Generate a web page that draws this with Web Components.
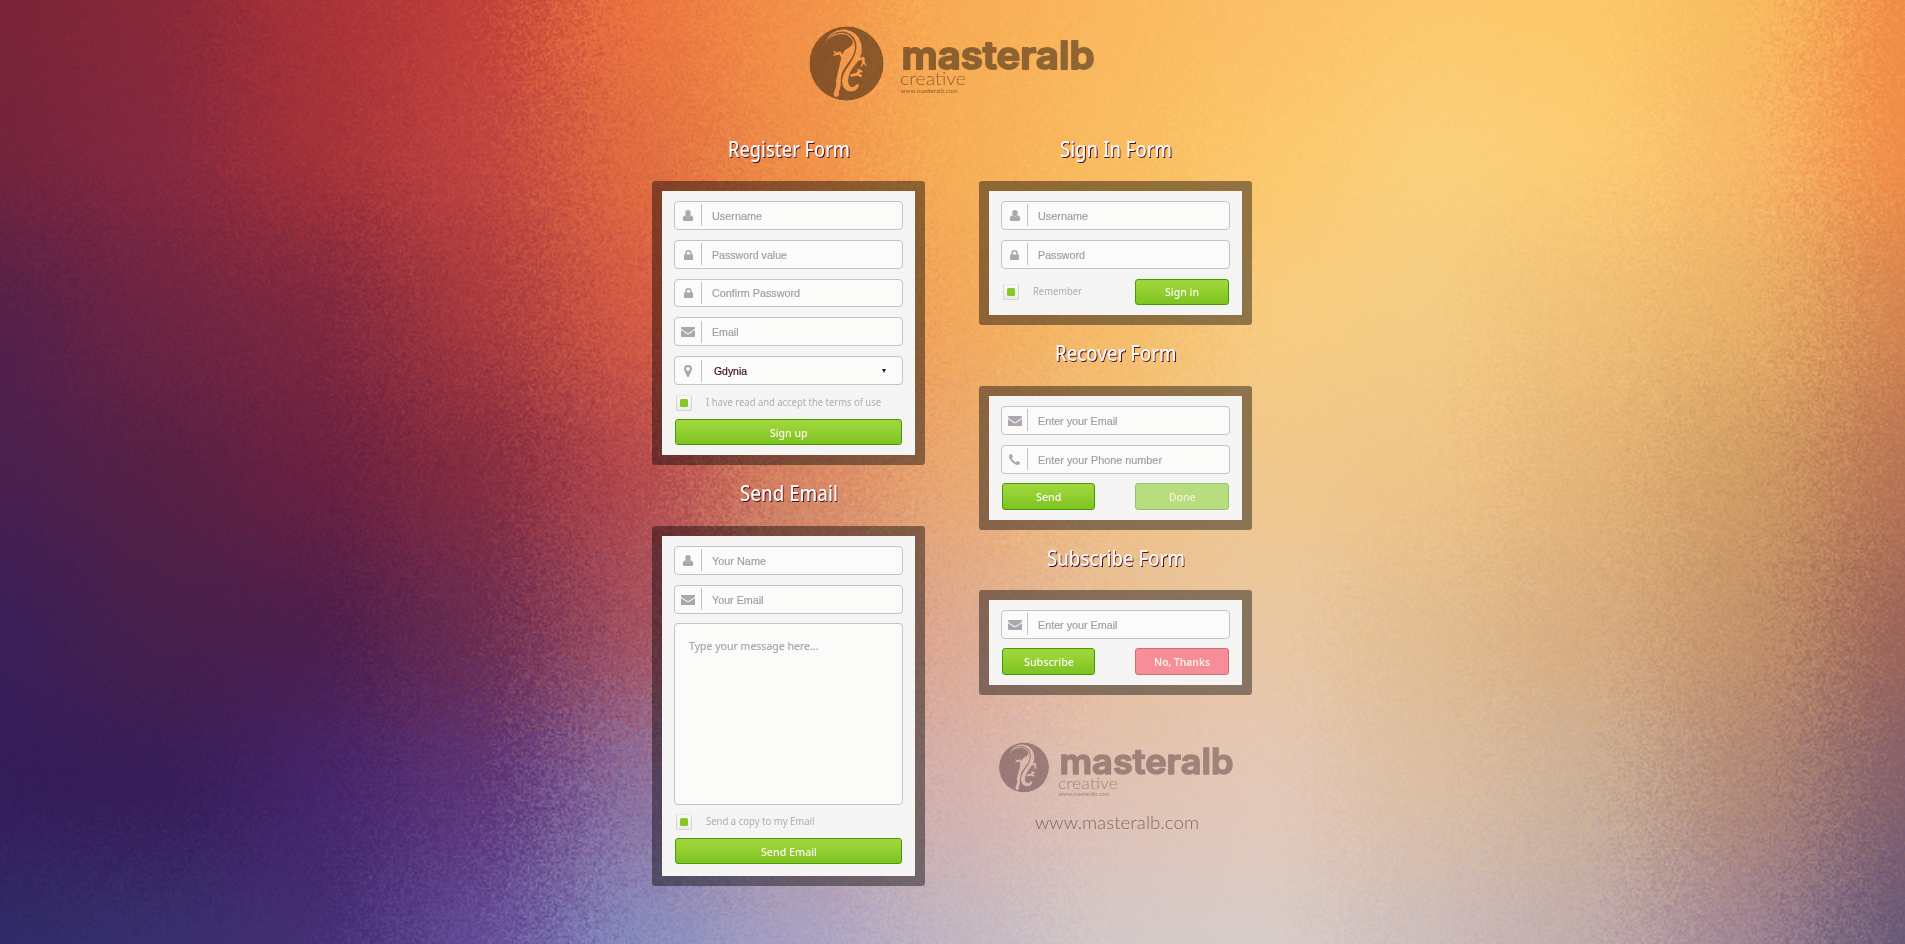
<!DOCTYPE html>
<html lang="en">
<head>
<meta charset="utf-8">
<title>Masteralb Forms</title>
<style>
html,body{margin:0;height:100%;overflow:hidden}
body{font-family:"Noto Sans","Open Sans",sans-serif;background:#c87c58}
</style>
</head>
<body>
<forms-page></forms-page>
<script>
const shadow = (el, html) => { el.attachShadow({mode:'open'}).innerHTML = html; return el.shadowRoot; };

/* Frosted colour field: a grid of colours, sampled with scattered positions. */
const GRID = [
'7a2438 882838 a83238 c0403a ec7440 f29048 f8ac54 fab85e fcc068 fcc86c fcc868 f8bc60 f08c48',
'74243c 842840 a43238 c04440 e06c40 f09048 f6ae56 fabc60 fcc86c fad07c fccc74 f8b868 f08c48',
'54204a 6e2442 7e2840 a83a3e d45a44 e4804c f2a85c f6bc68 f8cc80 f4cc84 f0c078 e8b068 d48450',
'4a2050 562044 6a2040 842c40 b4484c d68462 eaa870 f0c080 f0c88c f0c488 e4b478 d09c64 b87454',
'3a1e58 48204c 4c1e4c 6a2c50 a45060 c88878 deaa92 e8c09a eac8a4 e0bc90 d8ac80 c4926a 9c6458',
'341c5a 361c58 44246a 5c3478 8c70a0 b89aa0 d6b2ae e0c2b4 e4c8b8 dcbea4 ccb098 b08878 84606c',
'302c68 38306e 442e74 644c98 868cbe a8a0c4 c2b6c2 d4c8c8 d8ccc8 ccbcbc c0acac a08494 685878'
].map(r => r.split(' ').map(h => [0,2,4].map(i => parseInt(h.substr(i,2),16))));

customElements.define('grain-backdrop', class extends HTMLElement {
  connectedCallback(){
    const W = 1905, H = 944;
    const r = shadow(this, `<style>:host{display:block;position:absolute;inset:0;overflow:hidden}canvas{display:block}</style><canvas width="${W}" height="${H}"></canvas>`);
    const ctx = r.querySelector('canvas').getContext('2d');
    const img = ctx.createImageData(W, H), d = img.data;
    let s = 12345;
    const rnd = () => ((s = (s * 1664525 + 1013904223) >>> 0) / 4294967296);
    const cw = Math.ceil(W/2)+2, ch = Math.ceil(H/2)+2;
    const nx = new Float32Array(cw*ch), ny = new Float32Array(cw*ch);
    for (let i=0;i<nx.length;i++){ nx[i]=(rnd()+rnd()-1)*62; ny[i]=(rnd()+rnd()-1)*62; }
    const sm = t => t*t*(3-2*t)*.4 + t*.6;
    for (let y=0;y<H;y++) for (let x=0;x<W;x++){
      const cx=x>>1, cy=y>>1, k=cy*cw+cx, fx=(x&1)*.5, fy=(y&1)*.5;
      const mix=a=>(a[k]*(1-fx)+a[k+1]*fx)*(1-fy)+(a[k+cw]*(1-fx)+a[k+cw+1]*fx)*fy;
      let u=Math.min(11.999,Math.max(0,(x+mix(nx))/W*12)), v=Math.min(5.999,Math.max(0,(y+mix(ny))/H*6));
      const i=u|0, j=v|0; u=sm(u-i); v=sm(v-j);
      const a=GRID[j][i], b=GRID[j][i+1], c=GRID[j+1][i], e=GRID[j+1][i+1], o=(y*W+x)*4;
      for (let n=0;n<3;n++) d[o+n]=(a[n]*(1-u)+b[n]*u)*(1-v)+(c[n]*(1-u)+e[n]*u)*v;
      d[o+3]=255;
    }
    ctx.putImageData(img,0,0);
  }
});

/* Text condensed or widened to the width given in "w". */
customElements.define('fit-text', class extends HTMLElement {
  connectedCallback(){
    const w = +this.getAttribute('w');
    const r = shadow(this, `<style>:host{display:inline-block;white-space:nowrap;width:${w}px}span{display:inline-block;transform-origin:0 50%}</style><span><slot></slot></span>`);
    const sp = r.querySelector('span'), m = sp.getBoundingClientRect().width;
    if (m) sp.style.transform = `scaleX(${w/m})`;
  }
});

const ICONS = {
 user:['10','11','0 0 10 11','<path d="M5 0a2.75 2.9 0 0 1 2.75 2.9C7.75 4.8 6.5 6.3 5 6.3S2.25 4.8 2.25 2.9A2.75 2.9 0 0 1 5 0zM2.3 5.3C2.9 6.1 3.9 6.600 5 6.600s2.100-.5 2.700-1.300C9.500 5.500 10.200 7 10.200 9.200 10.200 10.400 9.300 11 8.300 11H1.700C.7 11-.2 10.400-.2 9.200-.2 7 .5 5.500 2.300 5.300z"/>'],
 lock:['9','10','0 0 9 10','<path fill-rule="evenodd" d="M1.300 4.500V3a3.200 3 0 0 1 6.400 0v1.500h.6q.7 0 .7.7v4.100q0 .7-.7.7H.7Q0 10 0 9.300V5.200q0-.7.7-.7zM2.800 4.500h3.400V3a1.700 1.600 0 0 0-3.400 0z"/>'],
 mail:['14','10','0 0 14 10','<path d="M.5 0h13Q14 0 14 .6c0 1-.6 1.700-1.200 2.100L8.500 5.500c-.5.400-1 .7-1.500.7s-1-.3-1.500-.7L1.200 2.700C.7 2.400 0 1.600 0 .6Q0 0 .5 0zM0 2.900c.2.300.5.5.8.700l4 2.700c.6.500 1.400 1 2.200 1s1.600-.5 2.200-1l4-2.700c.3-.2.600-.4.8-.7v6.400q0 .7-.6.7H.6Q0 10 0 9.300z"/>'],
 pin:['8','12','0 0 8 12','<path fill-rule="evenodd" d="M4 0a4 4 0 0 1 4 4c0 .6-.1 1.100-.3 1.500L4.900 11.400c-.4.800-1.400.8-1.800 0L.3 5.500C.1 5.100 0 4.600 0 4a4 4 0 0 1 4-4zm0 2a2 2 0 1 0 0 4 2 2 0 0 0 0-4z"/>'],
 phone:['11','11','0 0 11 11','<path d="M11 8.700c0 .4-.2 1.100-.4 1.400-.3.600-1.300.9-2 .9-.8 0-1.700-.3-2.400-.7C4.100 9.300 1.700 6.900.7 4.800.3 4.100 0 3.200 0 2.400 0 1.700.3.700.9.400 1.200.2 1.900 0 2.300 0c.3 0 .5.500.6.700l1 1.800c.3.700-1.100 1.200-1.100 1.700 0 .8 3.200 4 4 4 .5 0 1-1.400 1.700-1.100l1.800 1c.2.100.7.300.7.600z"/>']
};
customElements.define('line-icon', class extends HTMLElement {
  connectedCallback(){
    const [w,h,vb,p]=ICONS[this.getAttribute('name')];
    shadow(this, `<style>:host{display:block}svg{display:block;fill:#aca6af;overflow:visible}</style><svg width="${w}" height="${h}" viewBox="${vb}">${p}</svg>`);
  }
});

customElements.define('form-field', class extends HTMLElement {
  connectedCallback(){
    const sel = this.hasAttribute('select');
    shadow(this, `<style>
      :host{display:flex;align-items:center;box-sizing:border-box;height:28.800px;border:1px solid #c6c2c4;border-radius:4px;background:#fbfbf9;
        font:11px "Liberation Sans",Arial,sans-serif;color:#a29da3;-webkit-text-stroke:.2px currentColor}
      .i{display:flex;align-items:center;justify-content:center;width:var(--cell,26px);height:22px;border-right:1px solid #c4bfc2;box-sizing:content-box}
      line-icon{margin-top:1px}
      .t{padding:1px 0 0 ${sel?12:10}px;flex:1;color:${sel?'#3a1020':'inherit'}}
      .a{width:0;height:0;border:2.500px solid transparent;border-top:4px solid #3a1020;border-bottom:0;margin-right:16px}
      </style><div class="i"><line-icon name="${this.getAttribute('icon')}"></line-icon></div>
      <div class="t"><slot></slot></div>${sel?'<div class="a"></div>':''}`);
  }
});

customElements.define('message-box', class extends HTMLElement {
  connectedCallback(){ shadow(this, `<style>:host{display:block;box-sizing:border-box;height:182px;border:1px solid #c6c2c4;border-radius:4px;background:#fbfbf9;padding:13px 14px;font-size:11.500px;line-height:17px;color:#a9a5a9;-webkit-text-stroke:.2px currentColor}</style><slot></slot>`); }
});

customElements.define('check-row', class extends HTMLElement {
  connectedCallback(){ shadow(this, `<style>
    :host{display:flex;align-items:center;gap:14px;height:16px;padding-left:2px;font-size:11px;line-height:16px;color:#b0acb0}
    i{display:flex;align-items:center;justify-content:center;box-sizing:border-box;width:16px;height:16px;border:1px solid #d8d4d6;border-top-color:#e8e6e6;border-radius:2px;background:linear-gradient(#f8f8f6,#ecebea)}
    i::before{content:"";width:8px;height:8px;border-radius:1.500px;background:#84c726}
    div{margin-top:-2px}
    </style><i></i><div><slot></slot></div>`); }
});

customElements.define('push-button', class extends HTMLElement {
  connectedCallback(){ shadow(this, `<style>
    :host{display:flex;align-items:center;justify-content:center;box-sizing:border-box;height:26.500px;border:1px solid #459a0c;border-radius:3px;
      background:linear-gradient(#9fd63d,#98d235 35%,#85c828 75%,#80c41f);color:#fdfaf4;font-size:11.500px;font-weight:500;line-height:16px;padding-top:1px}
    :host([kind=done]){background:#b7dd7e;border-color:#8fc675;color:#f8efe0}
    :host([kind=no]){background:#f58e98;border-color:#cc706c;color:#fbf1e0;font-weight:600}
    </style><slot></slot>`); }
});

customElements.define('form-panel', class extends HTMLElement {
  connectedCallback(){ shadow(this, `<style>
    :host{display:block}
    h2{margin:0;height:var(--head,61px);font-size:21px;line-height:57px;font-weight:500;text-align:center;color:#fdf8f4;text-shadow:1px 1px 0 #4a1028}
    section{box-sizing:border-box;height:var(--h);border:10px solid rgba(0,0,0,.42);border-radius:3px;background-clip:padding-box;
      background-color:#f4f4f2;background-image:repeating-conic-gradient(#f9faf9 0 25%,#f0efed 0 50%);background-size:2px 2px;padding:10px 12px 0}
    .s{display:flex;flex-direction:column;gap:10px}
    </style><h2><slot name="title"></slot></h2><section><div class="s"><slot></slot></div></section>`); }
});

customElements.define('button-pair', class extends HTMLElement {
  connectedCallback(){ shadow(this, `<style>
    :host{display:grid;grid-template-columns:93px 94px;justify-content:space-between;padding:0 1px}
    </style><slot></slot>`); }
});

/* Brand mark: disc with a salamander cut out, and the word mark beside it. */
customElements.define('brand-logo', class extends HTMLElement {
  connectedCallback(){
    const foot = this.hasAttribute('foot');
    const ink = foot?'#281018':'#100804';
    const t = foot ? {w:211,h:54,cx:25,cy:25.500,r:25,x:60.500,tw:174,b:32,fs:35,sw:1.600,cb:46.500,cw:60,cf:16,ub:53.500,uw:51,uf:5.600}
                   : {w:288,h:78,cx:37.500,cy:37.500,r:37.200,x:92.500,tw:193,b:42.800,fs:38,sw:2,cb:58.500,cw:66,cf:18,ub:66.500,uw:57,uf:6.400};
    shadow(this, `<style>:host{display:block}svg{display:block;overflow:visible}</style>
    <svg width="${t.w}" height="${t.h}" opacity="${foot?.36:.46}" fill="${ink}">
      <mask id="m"><g transform="translate(${t.cx-t.r} ${t.cy-t.r}) scale(${t.r/112}) translate(-56 -46)">
        <circle cx="168" cy="158" r="112" fill="#fff"/>
        <g fill="#000" stroke="#000" stroke-linecap="round" stroke-linejoin="round">
          <path stroke="none" d="M104 97C112 68 142 50 172 57C205 66 218 97 213 126C209 150 190 164 179 184C170 203 170 226 184 229C196 230 194 216 205 222C205 234 192 244 178 242C157 238 150 216 158 193C168 168 194 146 198 112C201 86 184 66 160 62C136 60 116 72 104 97z"/>
          <path stroke="none" d="M158 70C142 68 126 74 112 86C128 66 154 62 172 71C186 78 196 96 193 114C190 144 160 165 153 190C148 208 154 230 144 244C150 256 136 264 131 254C127 246 136 236 138 218C137 203 139 196 144 178C148 164 149 148 157 128C164 110 184 112 188 94C184 80 172 72 158 70z"/>
          <path fill="none" stroke-width="8" d="M157 140L148 126L137 129M205 145L218 142L219 154M183 194L199 190L209 180M199 190L211 195M148 195L140 212"/>
          <path fill="none" stroke-width="4" d="M137 129L131 122M137 129L130 133M219 154L213 165M219 154L226 163M209 180L202 177M209 180L215 183"/>
        </g></g></mask>
      <circle cx="${t.cx}" cy="${t.cy}" r="${t.r}" mask="url(#m)"/>
      <text x="${t.x}" y="${t.b}" font-family="Inter,sans-serif" font-weight="600" font-size="${t.fs}" textLength="${t.tw}" lengthAdjust="spacingAndGlyphs" stroke="${ink}" stroke-width="${t.sw}" stroke-linejoin="round" stroke-linecap="round">masteralb</text>
      <text x="${t.x-1.500}" y="${t.cb}" font-family="Lato,sans-serif" font-weight="300" font-size="${t.cf}" textLength="${t.cw}" lengthAdjust="spacingAndGlyphs">creative</text>
      <text x="${t.x-1}" y="${t.ub}" font-family="Lato,sans-serif" font-size="${t.uf}" textLength="${t.uw}" lengthAdjust="spacingAndGlyphs">www.masteralb.com</text>
    </svg>`);
  }
});

customElements.define('site-address', class extends HTMLElement {
  connectedCallback(){ shadow(this, `<style>:host{display:block;font:300 17.500px/22px Lato,sans-serif;color:rgba(50,22,32,.55)}</style><slot></slot>`); }
});

customElements.define('forms-page', class extends HTMLElement {
  connectedCallback(){ shadow(this, `<style>
    :host{display:block;position:relative;width:1905px;height:944px;overflow:hidden}
    .page{position:relative}
    header{box-sizing:border-box;height:120px;padding:25.500px 0 0 808.500px}
    main{display:grid;grid-template-columns:273px 273px;column-gap:54px;padding-left:652px;align-items:start}
    .right{--cell:25px}
    form-panel push-button{margin:0 1px}
    button-pair push-button,.sign push-button{margin:0}
    button-pair{margin-top:-.6px}
    .first{line-height:59px}
    .reg check-row{margin-top:-.2px}
    .reg push-button{margin-top:-2px}
    .send push-button{margin-top:-2.500px}
    .send message-box,.send check-row{margin-top:-.6px}
    .sign{display:grid;grid-template-columns:1fr 94px;padding-right:1px}
    .sign check-row{margin-top:5px}
    footer{padding:46.500px 0 0 20px}
    site-address{margin:16.500px 0 0 36px}
    </style>
    <grain-backdrop></grain-backdrop>
    <div class="page">
    <header><brand-logo></brand-logo></header>
    <main>
      <div>
        <form-panel class="reg" style="--h:284px"><fit-text class="first" slot="title" w="122">Register Form</fit-text>
          <form-field icon="user"><fit-text w="50">Username</fit-text></form-field>
          <form-field icon="lock"><fit-text w="75">Password value</fit-text></form-field>
          <form-field icon="lock"><fit-text w="88">Confirm Password</fit-text></form-field>
          <form-field icon="mail"><fit-text w="26.500">Email</fit-text></form-field>
          <form-field icon="pin" select><fit-text w="33">Gdynia</fit-text></form-field>
          <check-row><fit-text w="175">I have read and accept the terms of use</fit-text></check-row>
          <push-button><fit-text w="37.500">Sign up</fit-text></push-button>
        </form-panel>
        <form-panel class="send" style="--h:360px"><fit-text slot="title" w="98">Send Email</fit-text>
          <form-field icon="user"><fit-text w="54">Your Name</fit-text></form-field>
          <form-field icon="mail"><fit-text w="51.500">Your Email</fit-text></form-field>
          <message-box><fit-text w="129.500">Type your message here...</fit-text></message-box>
          <check-row><fit-text w="108.500">Send a copy to my Email</fit-text></check-row>
          <push-button><fit-text w="56">Send Email</fit-text></push-button>
        </form-panel>
      </div>
      <div class="right">
        <form-panel style="--h:144px"><fit-text class="first" slot="title" w="112">Sign In Form</fit-text>
          <form-field icon="user"><fit-text w="50">Username</fit-text></form-field>
          <form-field icon="lock"><fit-text w="47">Password</fit-text></form-field>
          <div class="sign"><check-row><fit-text w="49">Remember</fit-text></check-row><push-button><fit-text w="34">Sign in</fit-text></push-button></div>
        </form-panel>
        <form-panel style="--h:144px"><fit-text slot="title" w="121.500">Recover Form</fit-text>
          <form-field icon="mail"><fit-text w="79.500">Enter your Email</fit-text></form-field>
          <form-field icon="phone"><fit-text w="124">Enter your Phone number</fit-text></form-field>
          <button-pair><push-button><fit-text w="25.500">Send</fit-text></push-button><push-button kind="done"><fit-text w="26.500">Done</fit-text></push-button></button-pair>
        </form-panel>
        <form-panel style="--h:105px;--head:60px"><fit-text slot="title" w="138">Subscribe Form</fit-text>
          <form-field icon="mail"><fit-text w="79.500">Enter your Email</fit-text></form-field>
          <button-pair><push-button><fit-text w="50">Subscribe</fit-text></push-button><push-button kind="no"><fit-text w="56">No, Thanks</fit-text></push-button></button-pair>
        </form-panel>
        <footer><brand-logo foot></brand-logo><site-address><fit-text w="164">www.masteralb.com</fit-text></site-address></footer>
      </div>
    </main></div>`); }
});
</script>
</body>
</html>
